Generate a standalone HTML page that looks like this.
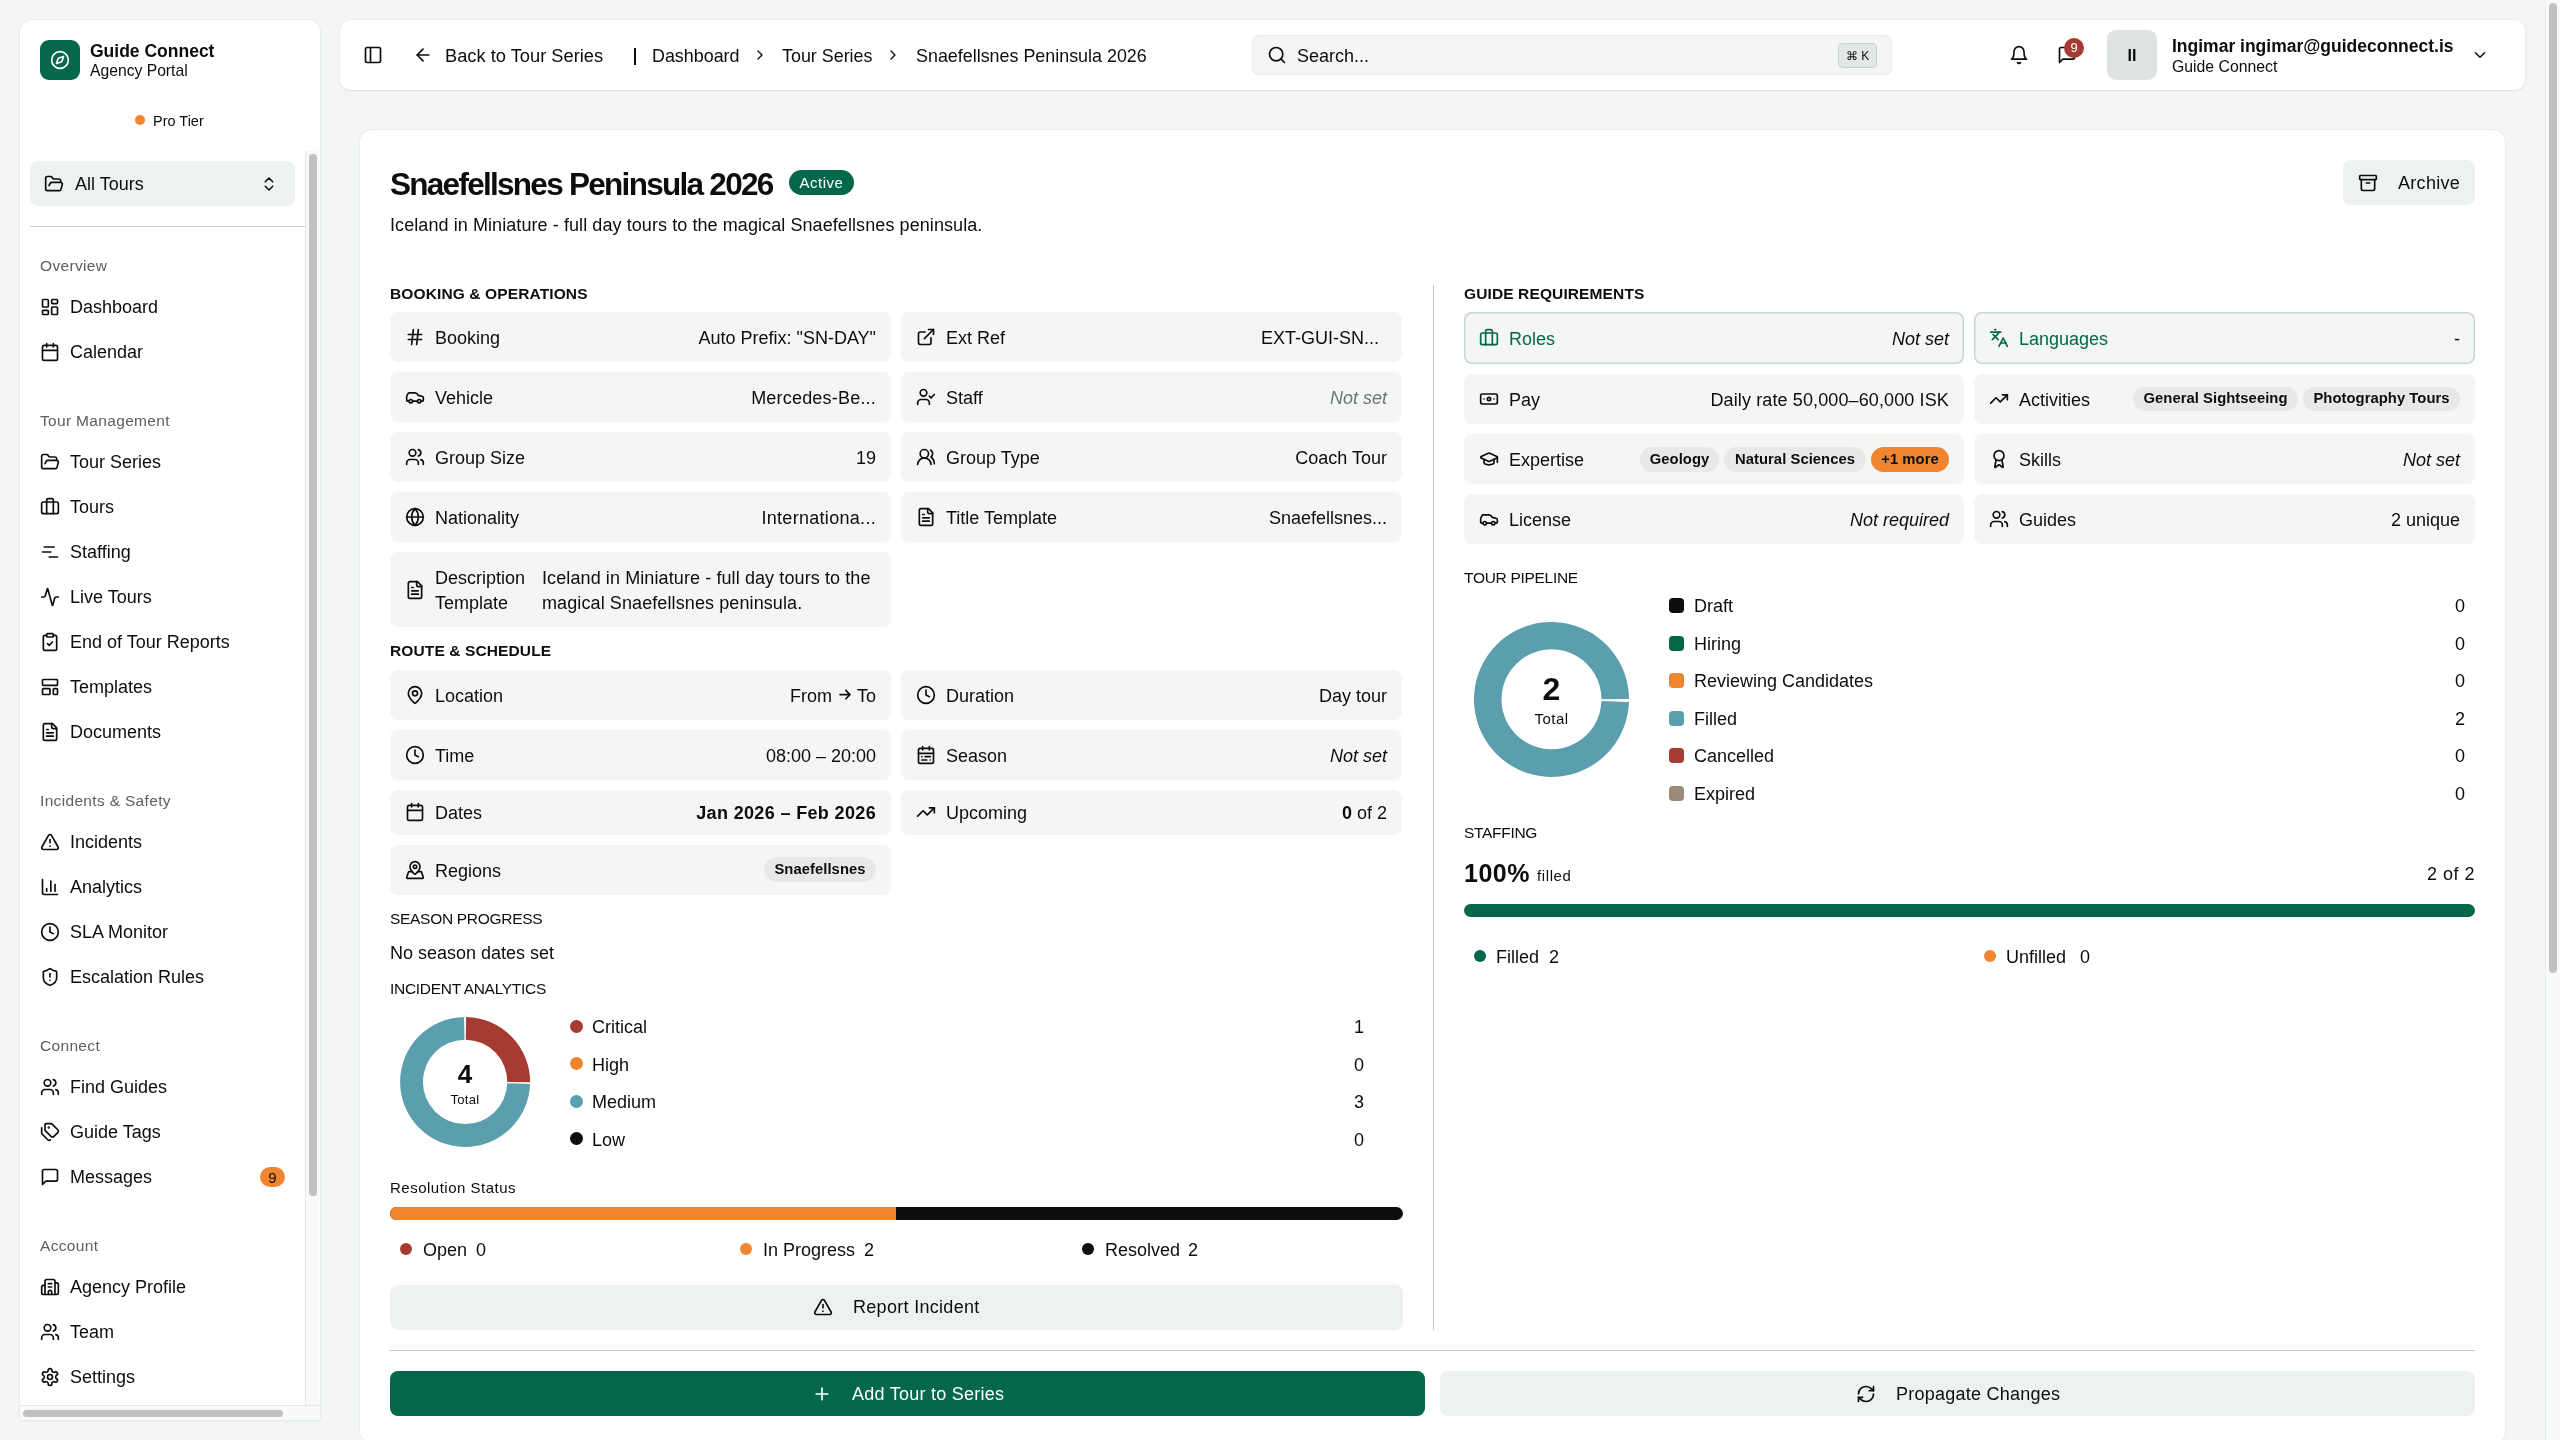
<!DOCTYPE html>
<html><head><meta charset="utf-8"><title>Snaefellsnes Peninsula 2026</title>
<style>
html,body{margin:0;padding:0;}
body{width:2560px;height:1440px;overflow:hidden;position:relative;background:#f4f6f5;font-family:"Liberation Sans",sans-serif;color:#0d0d0d;}
.t{position:absolute;white-space:nowrap;}
</style></head><body>
<div id="root" style="position:absolute;left:0;top:0;width:2560px;height:1440px;will-change:transform">
<div style="position:absolute;left:20px;top:20px;width:300px;height:1400px;background:#fff;border-radius:12px 12px 2px 2px;box-shadow:0 0 0 1px #e6ebe9, 0 1px 3px rgba(0,0,0,0.06);"></div>
<div style="position:absolute;left:40px;top:40px;width:40px;height:40px;background:#03684a;border-radius:9px;"></div>
<svg style="position:absolute;left:50.0px;top:50.0px" width="20" height="20" viewBox="0 0 24 24" fill="none" stroke="#fff" stroke-width="2" stroke-linecap="round" stroke-linejoin="round"><circle cx="12" cy="12" r="10"/><path d="m16.24 7.76-1.804 5.411a2 2 0 0 1-1.265 1.265L7.76 16.24l1.804-5.411a2 2 0 0 1 1.265-1.265z"/></svg>
<div class="t" style="left:90px;top:39.0px;height:24px;line-height:24px;font-size:17.5px;color:#0d0d0d;font-weight:700;">Guide Connect</div>
<div class="t" style="left:90px;top:59.7px;height:22px;line-height:22px;font-size:15.7px;color:#0d0d0d;">Agency Portal</div>
<div style="position:absolute;left:135px;top:115px;width:10px;height:10px;border-radius:5px;background:#f08530"></div>
<div class="t" style="left:153px;top:111.0px;height:20px;line-height:20px;font-size:14.5px;color:#0d0d0d;">Pro Tier</div>
<div style="position:absolute;left:30px;top:161px;width:265px;height:45px;background:#edf2f0;border-radius:8px;"></div>
<svg style="position:absolute;left:44.0px;top:173.5px" width="20" height="20" viewBox="0 0 24 24" fill="none" stroke="#0d0d0d" stroke-width="2" stroke-linecap="round" stroke-linejoin="round"><path d="m6 14 1.5-2.9A2 2 0 0 1 9.24 10H20a2 2 0 0 1 1.94 2.5l-1.54 6a2 2 0 0 1-1.95 1.5H4a2 2 0 0 1-2-2V5a2 2 0 0 1 2-2h3.9a2 2 0 0 1 1.69.9l.81 1.2a2 2 0 0 0 1.67.9H18a2 2 0 0 1 2 2v2"/></svg>
<div class="t" style="left:75px;top:172.0px;height:25px;line-height:25px;font-size:18px;color:#0d0d0d;">All Tours</div>
<svg style="position:absolute;left:260.0px;top:174.5px" width="18" height="18" viewBox="0 0 24 24" fill="none" stroke="#0d0d0d" stroke-width="2" stroke-linecap="round" stroke-linejoin="round"><path d="m7 15 5 5 5-5"/><path d="m7 9 5-5 5 5"/></svg>
<div style="position:absolute;left:30px;top:226px;width:275px;height:1px;background:#c9cdcc;border-radius:0px;"></div>
<div style="position:absolute;left:305px;top:151px;width:14px;height:1254px;background:#f8f9f9;border-radius:0px;box-shadow:inset 1px 0 0 #e4e8e7;"></div>
<div style="position:absolute;left:309px;top:154px;width:8px;height:1042px;background:#c1c1c1;border-radius:4px;"></div>
<div style="position:absolute;left:20px;top:1405px;width:300px;height:15px;background:#f8f9f9;border-radius:0px;box-shadow:inset 0 1px 0 #e4e8e7;"></div>
<div style="position:absolute;left:23px;top:1409.5px;width:260px;height:7px;background:#c1c1c1;border-radius:3.5px;"></div>
<div class="t" style="left:40px;top:254.7px;height:22px;line-height:22px;font-size:15.5px;color:#5c605f;letter-spacing:0.33px;">Overview</div>
<svg style="position:absolute;left:40.0px;top:297.0px" width="20" height="20" viewBox="0 0 24 24" fill="none" stroke="#0d0d0d" stroke-width="2" stroke-linecap="round" stroke-linejoin="round"><rect width="7" height="9" x="3" y="3" rx="1"/><rect width="7" height="5" x="14" y="3" rx="1"/><rect width="7" height="9" x="14" y="12" rx="1"/><rect width="7" height="5" x="3" y="16" rx="1"/></svg>
<div class="t" style="left:70px;top:294.5px;height:25px;line-height:25px;font-size:18px;color:#0d0d0d;">Dashboard</div>
<svg style="position:absolute;left:40.0px;top:342.0px" width="20" height="20" viewBox="0 0 24 24" fill="none" stroke="#0d0d0d" stroke-width="2" stroke-linecap="round" stroke-linejoin="round"><path d="M8 2v4"/><path d="M16 2v4"/><rect width="18" height="18" x="3" y="4" rx="2"/><path d="M3 10h18"/></svg>
<div class="t" style="left:70px;top:339.5px;height:25px;line-height:25px;font-size:18px;color:#0d0d0d;">Calendar</div>
<div class="t" style="left:40px;top:409.7px;height:22px;line-height:22px;font-size:15.5px;color:#5c605f;letter-spacing:0.33px;">Tour Management</div>
<svg style="position:absolute;left:40.0px;top:452.0px" width="20" height="20" viewBox="0 0 24 24" fill="none" stroke="#0d0d0d" stroke-width="2" stroke-linecap="round" stroke-linejoin="round"><path d="m6 14 1.5-2.9A2 2 0 0 1 9.24 10H20a2 2 0 0 1 1.94 2.5l-1.54 6a2 2 0 0 1-1.95 1.5H4a2 2 0 0 1-2-2V5a2 2 0 0 1 2-2h3.9a2 2 0 0 1 1.69.9l.81 1.2a2 2 0 0 0 1.67.9H18a2 2 0 0 1 2 2v2"/></svg>
<div class="t" style="left:70px;top:449.5px;height:25px;line-height:25px;font-size:18px;color:#0d0d0d;">Tour Series</div>
<svg style="position:absolute;left:40.0px;top:497.0px" width="20" height="20" viewBox="0 0 24 24" fill="none" stroke="#0d0d0d" stroke-width="2" stroke-linecap="round" stroke-linejoin="round"><path d="M16 20V4a2 2 0 0 0-2-2h-4a2 2 0 0 0-2 2v16"/><rect width="20" height="14" x="2" y="6" rx="2"/></svg>
<div class="t" style="left:70px;top:494.5px;height:25px;line-height:25px;font-size:18px;color:#0d0d0d;">Tours</div>
<svg style="position:absolute;left:40.0px;top:542.0px" width="20" height="20" viewBox="0 0 24 24" fill="none" stroke="#0d0d0d" stroke-width="2" stroke-linecap="round" stroke-linejoin="round"><path d="M5 6h12"/><path d="M3 12h10"/><path d="M11 18h10"/></svg>
<div class="t" style="left:70px;top:539.5px;height:25px;line-height:25px;font-size:18px;color:#0d0d0d;">Staffing</div>
<svg style="position:absolute;left:40.0px;top:587.0px" width="20" height="20" viewBox="0 0 24 24" fill="none" stroke="#0d0d0d" stroke-width="2" stroke-linecap="round" stroke-linejoin="round"><path d="M22 12h-2.48a2 2 0 0 0-1.93 1.46l-2.35 8.36a.25.25 0 0 1-.48 0L9.24 2.18a.25.25 0 0 0-.48 0l-2.35 8.36A2 2 0 0 1 4.49 12H2"/></svg>
<div class="t" style="left:70px;top:584.5px;height:25px;line-height:25px;font-size:18px;color:#0d0d0d;">Live Tours</div>
<svg style="position:absolute;left:40.0px;top:632.0px" width="20" height="20" viewBox="0 0 24 24" fill="none" stroke="#0d0d0d" stroke-width="2" stroke-linecap="round" stroke-linejoin="round"><rect width="8" height="4" x="8" y="2" rx="1" ry="1"/><path d="M16 4h2a2 2 0 0 1 2 2v14a2 2 0 0 1-2 2H6a2 2 0 0 1-2-2V6a2 2 0 0 1 2-2h2"/><path d="m9 14 2 2 4-4"/></svg>
<div class="t" style="left:70px;top:629.5px;height:25px;line-height:25px;font-size:18px;color:#0d0d0d;">End of Tour Reports</div>
<svg style="position:absolute;left:40.0px;top:677.0px" width="20" height="20" viewBox="0 0 24 24" fill="none" stroke="#0d0d0d" stroke-width="2" stroke-linecap="round" stroke-linejoin="round"><rect width="18" height="7" x="3" y="3" rx="1"/><rect width="9" height="7" x="3" y="14" rx="1"/><rect width="5" height="7" x="16" y="14" rx="1"/></svg>
<div class="t" style="left:70px;top:674.5px;height:25px;line-height:25px;font-size:18px;color:#0d0d0d;">Templates</div>
<svg style="position:absolute;left:40.0px;top:722.0px" width="20" height="20" viewBox="0 0 24 24" fill="none" stroke="#0d0d0d" stroke-width="2" stroke-linecap="round" stroke-linejoin="round"><path d="M15 2H6a2 2 0 0 0-2 2v16a2 2 0 0 0 2 2h12a2 2 0 0 0 2-2V7Z"/><path d="M14 2v4a2 2 0 0 0 2 2h4"/><path d="M10 9H8"/><path d="M16 13H8"/><path d="M16 17H8"/></svg>
<div class="t" style="left:70px;top:719.5px;height:25px;line-height:25px;font-size:18px;color:#0d0d0d;">Documents</div>
<div class="t" style="left:40px;top:789.7px;height:22px;line-height:22px;font-size:15.5px;color:#5c605f;letter-spacing:0.33px;">Incidents &amp; Safety</div>
<svg style="position:absolute;left:40.0px;top:832.0px" width="20" height="20" viewBox="0 0 24 24" fill="none" stroke="#0d0d0d" stroke-width="2" stroke-linecap="round" stroke-linejoin="round"><path d="m21.73 18-8-14a2 2 0 0 0-3.48 0l-8 14A2 2 0 0 0 4 21h16a2 2 0 0 0 1.73-3"/><path d="M12 9v4"/><path d="M12 17h.01"/></svg>
<div class="t" style="left:70px;top:829.5px;height:25px;line-height:25px;font-size:18px;color:#0d0d0d;">Incidents</div>
<svg style="position:absolute;left:40.0px;top:877.0px" width="20" height="20" viewBox="0 0 24 24" fill="none" stroke="#0d0d0d" stroke-width="2" stroke-linecap="round" stroke-linejoin="round"><path d="M3 3v16a2 2 0 0 0 2 2h16"/><path d="M18 17V9"/><path d="M13 17V5"/><path d="M8 17v-3"/></svg>
<div class="t" style="left:70px;top:874.5px;height:25px;line-height:25px;font-size:18px;color:#0d0d0d;">Analytics</div>
<svg style="position:absolute;left:40.0px;top:922.0px" width="20" height="20" viewBox="0 0 24 24" fill="none" stroke="#0d0d0d" stroke-width="2" stroke-linecap="round" stroke-linejoin="round"><circle cx="12" cy="12" r="10"/><polyline points="12 6 12 12 16 14"/></svg>
<div class="t" style="left:70px;top:919.5px;height:25px;line-height:25px;font-size:18px;color:#0d0d0d;">SLA Monitor</div>
<svg style="position:absolute;left:40.0px;top:967.0px" width="20" height="20" viewBox="0 0 24 24" fill="none" stroke="#0d0d0d" stroke-width="2" stroke-linecap="round" stroke-linejoin="round"><path d="M20 13c0 5-3.5 7.5-7.66 8.95a1 1 0 0 1-.67-.01C7.5 20.5 4 18 4 13V6a1 1 0 0 1 1-1c2 0 4.5-1.2 6.240-2.72a1.17 1.17 0 0 1 1.52 0C14.51 3.81 17 5 19 5a1 1 0 0 1 1 1z"/><path d="M12 8v4"/><path d="M12 16h.01"/></svg>
<div class="t" style="left:70px;top:964.5px;height:25px;line-height:25px;font-size:18px;color:#0d0d0d;">Escalation Rules</div>
<div class="t" style="left:40px;top:1034.7px;height:22px;line-height:22px;font-size:15.5px;color:#5c605f;letter-spacing:0.33px;">Connect</div>
<svg style="position:absolute;left:40.0px;top:1077.0px" width="20" height="20" viewBox="0 0 24 24" fill="none" stroke="#0d0d0d" stroke-width="2" stroke-linecap="round" stroke-linejoin="round"><path d="M16 21v-2a4 4 0 0 0-4-4H6a4 4 0 0 0-4 4v2"/><circle cx="9" cy="7" r="4"/><path d="M22 21v-2a4 4 0 0 0-3-3.87"/><path d="M16 3.130a4 4 0 0 1 0 7.75"/></svg>
<div class="t" style="left:70px;top:1074.5px;height:25px;line-height:25px;font-size:18px;color:#0d0d0d;">Find Guides</div>
<svg style="position:absolute;left:40.0px;top:1122.0px" width="20" height="20" viewBox="0 0 24 24" fill="none" stroke="#0d0d0d" stroke-width="2" stroke-linecap="round" stroke-linejoin="round"><path d="M13.172 2a2 2 0 0 1 1.414.586l6.71 6.71a2.4 2.4 0 0 1 0 3.408l-4.592 4.592a2.4 2.4 0 0 1-3.408 0l-6.71-6.71A2 2 0 0 1 6 9.172V3a1 1 0 0 1 1-1z"/><path d="M2 7v6.172a2 2 0 0 0 .586 1.414l6.71 6.71a2.4 2.4 0 0 0 3.191.193"/><circle cx="10.5" cy="6.5" r=".5" fill="currentColor"/></svg>
<div class="t" style="left:70px;top:1119.5px;height:25px;line-height:25px;font-size:18px;color:#0d0d0d;">Guide Tags</div>
<svg style="position:absolute;left:40.0px;top:1167.0px" width="20" height="20" viewBox="0 0 24 24" fill="none" stroke="#0d0d0d" stroke-width="2" stroke-linecap="round" stroke-linejoin="round"><path d="M21 15a2 2 0 0 1-2 2H7l-4 4V5a2 2 0 0 1 2-2h14a2 2 0 0 1 2 2z"/></svg>
<div class="t" style="left:70px;top:1164.5px;height:25px;line-height:25px;font-size:18px;color:#0d0d0d;">Messages</div>
<div class="t" style="left:40px;top:1234.7px;height:22px;line-height:22px;font-size:15.5px;color:#5c605f;letter-spacing:0.33px;">Account</div>
<svg style="position:absolute;left:40.0px;top:1277.0px" width="20" height="20" viewBox="0 0 24 24" fill="none" stroke="#0d0d0d" stroke-width="2" stroke-linecap="round" stroke-linejoin="round"><path d="M10 12h4"/><path d="M10 8h4"/><path d="M14 21v-3a2 2 0 0 0-4 0v3"/><path d="M6 10H4a2 2 0 0 0-2 2v7a2 2 0 0 0 2 2h16a2 2 0 0 0 2-2V9a2 2 0 0 0-2-2h-2"/><path d="M6 21V5a2 2 0 0 1 2-2h8a2 2 0 0 1 2 2v16"/></svg>
<div class="t" style="left:70px;top:1274.5px;height:25px;line-height:25px;font-size:18px;color:#0d0d0d;">Agency Profile</div>
<svg style="position:absolute;left:40.0px;top:1322.0px" width="20" height="20" viewBox="0 0 24 24" fill="none" stroke="#0d0d0d" stroke-width="2" stroke-linecap="round" stroke-linejoin="round"><path d="M16 21v-2a4 4 0 0 0-4-4H6a4 4 0 0 0-4 4v2"/><circle cx="9" cy="7" r="4"/><path d="M22 21v-2a4 4 0 0 0-3-3.87"/><path d="M16 3.130a4 4 0 0 1 0 7.75"/></svg>
<div class="t" style="left:70px;top:1319.5px;height:25px;line-height:25px;font-size:18px;color:#0d0d0d;">Team</div>
<svg style="position:absolute;left:40.0px;top:1367.0px" width="20" height="20" viewBox="0 0 24 24" fill="none" stroke="#0d0d0d" stroke-width="2" stroke-linecap="round" stroke-linejoin="round"><path d="M12.22 2h-.44a2 2 0 0 0-2 2v.18a2 2 0 0 1-1 1.73l-.43.25a2 2 0 0 1-2 0l-.15-.08a2 2 0 0 0-2.73.73l-.22.38a2 2 0 0 0 .73 2.73l.15.1a2 2 0 0 1 1 1.72v.51a2 2 0 0 1-1 1.74l-.15.09a2 2 0 0 0-.73 2.730l.22.38a2 2 0 0 0 2.73.73l.15-.08a2 2 0 0 1 2 0l.43.25a2 2 0 0 1 1 1.73V20a2 2 0 0 0 2 2h.44a2 2 0 0 0 2-2v-.18a2 2 0 0 1 1-1.73l.43-.25a2 2 0 0 1 2 0l.15.08a2 2 0 0 0 2.73-.73l.22-.39a2 2 0 0 0-.73-2.73l-.15-.08a2 2 0 0 1-1-1.74v-.5a2 2 0 0 1 1-1.74l.15-.09a2 2 0 0 0 .73-2.73l-.22-.38a2 2 0 0 0-2.73-.73l-.15.08a2 2 0 0 1-2 0l-.43-.25a2 2 0 0 1-1-1.73V4a2 2 0 0 0-2-2z"/><circle cx="12" cy="12" r="3"/></svg>
<div class="t" style="left:70px;top:1364.5px;height:25px;line-height:25px;font-size:18px;color:#0d0d0d;">Settings</div>
<div style="position:absolute;left:260px;top:1167px;width:25px;height:20px;background:#f08530;border-radius:10px;"></div>
<div class="t" style="left:-327.5px;width:1200px;text-align:center;top:1166.5px;height:21px;line-height:21px;font-size:15px;color:#0d0d0d;">9</div>
<div style="position:absolute;left:340px;top:20px;width:2185px;height:70px;background:#fff;border-radius:10px;box-shadow:0 1px 2px rgba(0,0,0,0.08), 0 0 0 1px #eef1f0;"></div>
<svg style="position:absolute;left:363.0px;top:45.0px" width="20" height="20" viewBox="0 0 24 24" fill="none" stroke="#0d0d0d" stroke-width="2" stroke-linecap="round" stroke-linejoin="round"><rect width="18" height="18" x="3" y="3" rx="2"/><path d="M9 3v18"/></svg>
<svg style="position:absolute;left:413.0px;top:45.0px" width="20" height="20" viewBox="0 0 24 24" fill="none" stroke="#0d0d0d" stroke-width="2" stroke-linecap="round" stroke-linejoin="round"><path d="m12 19-7-7 7-7"/><path d="M19 12H5"/></svg>
<div class="t" style="left:445px;top:42.5px;height:26px;line-height:26px;font-size:18.3px;color:#0d0d0d;">Back to Tour Series</div>
<div style="position:absolute;left:634px;top:48px;width:1.5px;height:17px;background:#0d0d0d;border-radius:0px;"></div>
<div class="t" style="left:652px;top:44.0px;height:25px;line-height:25px;font-size:17.9px;color:#0d0d0d;">Dashboard</div>
<svg style="position:absolute;left:752.0px;top:47.0px" width="16" height="16" viewBox="0 0 24 24" fill="none" stroke="#0d0d0d" stroke-width="2" stroke-linecap="round" stroke-linejoin="round"><path d="m9 18 6-6-6-6"/></svg>
<div class="t" style="left:782px;top:44.0px;height:25px;line-height:25px;font-size:17.9px;color:#0d0d0d;">Tour Series</div>
<svg style="position:absolute;left:885.0px;top:47.0px" width="16" height="16" viewBox="0 0 24 24" fill="none" stroke="#0d0d0d" stroke-width="2" stroke-linecap="round" stroke-linejoin="round"><path d="m9 18 6-6-6-6"/></svg>
<div class="t" style="left:916px;top:44.0px;height:25px;line-height:25px;font-size:17.9px;color:#0d0d0d;">Snaefellsnes Peninsula 2026</div>
<div style="position:absolute;left:1252px;top:35px;width:640px;height:40px;background:#f4f6f5;border-radius:7px;box-shadow:inset 0 0 0 1px #e9eceb;"></div>
<svg style="position:absolute;left:1267.0px;top:45.0px" width="20" height="20" viewBox="0 0 24 24" fill="none" stroke="#0d0d0d" stroke-width="2" stroke-linecap="round" stroke-linejoin="round"><circle cx="11" cy="11" r="8"/><path d="m21 21-4.3-4.3"/></svg>
<div class="t" style="left:1297px;top:44.0px;height:25px;line-height:25px;font-size:18px;color:#0d0d0d;">Search...</div>
<div style="position:absolute;left:1838px;top:43px;width:39px;height:25px;background:#e3e7e6;border-radius:5px;box-shadow:inset 0 0 0 1px #c9cecc;"></div>
<div class="t" style="left:1257.5px;width:1200px;text-align:center;top:48.0px;height:17px;line-height:17px;font-size:12px;color:#0d0d0d;">⌘ K</div>
<svg style="position:absolute;left:2009.0px;top:45.0px" width="20" height="20" viewBox="0 0 24 24" fill="none" stroke="#0d0d0d" stroke-width="2" stroke-linecap="round" stroke-linejoin="round"><path d="M6 8a6 6 0 0 1 12 0c0 7 3 9 3 9H3s3-2 3-9"/><path d="M10.3 21a1.94 1.94 0 0 0 3.4 0"/></svg>
<svg style="position:absolute;left:2057.0px;top:45.0px" width="20" height="20" viewBox="0 0 24 24" fill="none" stroke="#0d0d0d" stroke-width="2" stroke-linecap="round" stroke-linejoin="round"><path d="M21 15a2 2 0 0 1-2 2H7l-4 4V5a2 2 0 0 1 2-2h14a2 2 0 0 1 2 2z"/></svg>
<div style="position:absolute;left:2064px;top:38px;width:20px;height:20px;border-radius:10px;background:#a63c31;color:#fff;font-size:13px;line-height:20px;text-align:center">9</div>
<div style="position:absolute;left:2107px;top:30px;width:50px;height:50px;background:#dfe3e2;border-radius:9px;"></div>
<div class="t" style="left:1532px;width:1200px;text-align:center;top:45.0px;height:22px;line-height:22px;font-size:16px;color:#0d0d0d;font-weight:700;">II</div>
<div class="t" style="left:2172px;top:33.5px;height:24px;line-height:24px;font-size:17.5px;color:#0d0d0d;font-weight:700;">Ingimar ingimar@guideconnect.is</div>
<div class="t" style="left:2172px;top:55.5px;height:22px;line-height:22px;font-size:15.8px;color:#0d0d0d;">Guide Connect</div>
<svg style="position:absolute;left:2471.0px;top:46.0px" width="18" height="18" viewBox="0 0 24 24" fill="none" stroke="#0d0d0d" stroke-width="2" stroke-linecap="round" stroke-linejoin="round"><path d="m6 9 6 6 6-6"/></svg>
<div style="position:absolute;left:2545px;top:0px;width:15px;height:1440px;background:#f8f9f9;border-radius:0px;box-shadow:inset 1px 0 0 #e4e8e7;"></div>
<div style="position:absolute;left:2549px;top:3px;width:8px;height:970px;background:#c1c1c1;border-radius:4px;"></div>
<div style="position:absolute;left:360px;top:130px;width:2145px;height:1313px;background:#fff;border-radius:12px;box-shadow:0 0 0 1px #e9edeb, 0 1px 3px rgba(0,0,0,0.05);"></div>
<div class="t" style="left:390px;top:162.0px;height:44px;line-height:44px;font-size:31.5px;color:#0d0d0d;letter-spacing:-1.72px;font-weight:700;">Snaefellsnes Peninsula 2026</div>
<div style="position:absolute;left:789px;top:170px;width:65px;height:25px;background:#03684a;border-radius:12.5px;"></div>
<div class="t" style="left:221.5px;width:1200px;text-align:center;top:171.5px;height:21px;line-height:21px;font-size:15px;color:#fff;letter-spacing:0.5px;">Active</div>
<div class="t" style="left:390px;top:213.0px;height:25px;line-height:25px;font-size:18px;color:#0d0d0d;letter-spacing:0.08px;">Iceland in Miniature - full day tours to the magical Snaefellsnes peninsula.</div>
<div style="position:absolute;left:2343px;top:160px;width:132px;height:45px;background:#edf2f0;border-radius:8px;"></div>
<svg style="position:absolute;left:2358.0px;top:172.5px" width="20" height="20" viewBox="0 0 24 24" fill="none" stroke="#0d0d0d" stroke-width="2" stroke-linecap="round" stroke-linejoin="round"><rect width="20" height="5" x="2" y="3" rx="1"/><path d="M4 8v11a2 2 0 0 0 2 2h12a2 2 0 0 0 2-2V8"/><path d="M10 12h4"/></svg>
<div class="t" style="left:2398px;top:170.5px;height:25px;line-height:25px;font-size:18px;color:#0d0d0d;letter-spacing:0.3px;">Archive</div>
<div class="t" style="left:390px;top:282.5px;height:22px;line-height:22px;font-size:15.5px;color:#0d0d0d;letter-spacing:0.12px;font-weight:700;">BOOKING &amp; OPERATIONS</div>
<div style="position:absolute;left:390px;top:312px;width:501px;height:50px;background:#f3f6f5;border-radius:8px;"></div>
<svg style="position:absolute;left:405.0px;top:326.5px" width="20" height="20" viewBox="0 0 24 24" fill="none" stroke="#0d0d0d" stroke-width="2" stroke-linecap="round" stroke-linejoin="round"><line x1="4" x2="20" y1="9" y2="9"/><line x1="4" x2="20" y1="15" y2="15"/><line x1="10" x2="8" y1="3" y2="21"/><line x1="16" x2="14" y1="3" y2="21"/></svg>
<div class="t" style="left:435px;top:325.5px;height:25px;line-height:25px;font-size:18px;color:#0d0d0d;">Booking</div>
<div class="t" style="left:-324px;width:1200px;text-align:right;top:325.5px;height:25px;line-height:25px;font-size:18px;color:#0d0d0d;">Auto Prefix: &quot;SN-DAY&quot;</div>
<div style="position:absolute;left:901px;top:312px;width:501px;height:50px;background:#f3f6f5;border-radius:8px;"></div>
<svg style="position:absolute;left:916.0px;top:326.5px" width="20" height="20" viewBox="0 0 24 24" fill="none" stroke="#0d0d0d" stroke-width="2" stroke-linecap="round" stroke-linejoin="round"><path d="M15 3h6v6"/><path d="M10 14 21 3"/><path d="M18 13v6a2 2 0 0 1-2 2H5a2 2 0 0 1-2-2V8a2 2 0 0 1 2-2h6"/></svg>
<div class="t" style="left:946px;top:325.5px;height:25px;line-height:25px;font-size:18px;color:#0d0d0d;">Ext Ref</div>
<div class="t" style="left:179px;width:1200px;text-align:right;top:325.5px;height:25px;line-height:25px;font-size:18px;color:#0d0d0d;">EXT-GUI-SN...</div>
<div style="position:absolute;left:390px;top:372px;width:501px;height:50px;background:#f3f6f5;border-radius:8px;"></div>
<svg style="position:absolute;left:405.0px;top:386.5px" width="20" height="20" viewBox="0 0 24 24" fill="none" stroke="#0d0d0d" stroke-width="2" stroke-linecap="round" stroke-linejoin="round"><path d="M19 17h2c.6 0 1-.4 1-1v-3c0-.9-.7-1.7-1.5-1.9C18.7 10.6 16 10 16 10s-1.3-1.4-2.2-2.3c-.5-.4-1.1-.7-1.8-.7H5c-.6 0-1.1.4-1.4.9l-1.4 2.9A3.7 3.7 0 0 0 2 12v4c0 .6.4 1 1 1h2"/><circle cx="7" cy="17" r="2"/><path d="M9 17h6"/><circle cx="17" cy="17" r="2"/></svg>
<div class="t" style="left:435px;top:385.5px;height:25px;line-height:25px;font-size:18px;color:#0d0d0d;">Vehicle</div>
<div class="t" style="left:-324px;width:1200px;text-align:right;top:385.5px;height:25px;line-height:25px;font-size:18px;color:#0d0d0d;letter-spacing:0.2px;">Mercedes-Be...</div>
<div style="position:absolute;left:901px;top:372px;width:501px;height:50px;background:#f3f6f5;border-radius:8px;"></div>
<svg style="position:absolute;left:916.0px;top:386.5px" width="20" height="20" viewBox="0 0 24 24" fill="none" stroke="#0d0d0d" stroke-width="2" stroke-linecap="round" stroke-linejoin="round"><path d="M16 21v-2a4 4 0 0 0-4-4H6a4 4 0 0 0-4 4v2"/><circle cx="9" cy="7" r="4"/><polyline points="16 11 18 13 22 9"/></svg>
<div class="t" style="left:946px;top:385.5px;height:25px;line-height:25px;font-size:18px;color:#0d0d0d;">Staff</div>
<div class="t" style="left:187px;width:1200px;text-align:right;top:385.5px;height:25px;line-height:25px;font-size:18px;color:#6f7372;font-style:italic;">Not set</div>
<div style="position:absolute;left:390px;top:432px;width:501px;height:50px;background:#f3f6f5;border-radius:8px;"></div>
<svg style="position:absolute;left:405.0px;top:446.5px" width="20" height="20" viewBox="0 0 24 24" fill="none" stroke="#0d0d0d" stroke-width="2" stroke-linecap="round" stroke-linejoin="round"><path d="M16 21v-2a4 4 0 0 0-4-4H6a4 4 0 0 0-4 4v2"/><circle cx="9" cy="7" r="4"/><path d="M22 21v-2a4 4 0 0 0-3-3.87"/><path d="M16 3.130a4 4 0 0 1 0 7.75"/></svg>
<div class="t" style="left:435px;top:445.5px;height:25px;line-height:25px;font-size:18px;color:#0d0d0d;">Group Size</div>
<div class="t" style="left:-324px;width:1200px;text-align:right;top:445.5px;height:25px;line-height:25px;font-size:18px;color:#0d0d0d;">19</div>
<div style="position:absolute;left:901px;top:432px;width:501px;height:50px;background:#f3f6f5;border-radius:8px;"></div>
<svg style="position:absolute;left:916.0px;top:446.5px" width="20" height="20" viewBox="0 0 24 24" fill="none" stroke="#0d0d0d" stroke-width="2" stroke-linecap="round" stroke-linejoin="round"><path d="M18 21a8 8 0 0 0-16 0"/><circle cx="10" cy="8" r="5"/><path d="M22 20c0-3.37-2-6.5-4-8a5 5 0 0 0-.45-8.3"/></svg>
<div class="t" style="left:946px;top:445.5px;height:25px;line-height:25px;font-size:18px;color:#0d0d0d;">Group Type</div>
<div class="t" style="left:187px;width:1200px;text-align:right;top:445.5px;height:25px;line-height:25px;font-size:18px;color:#0d0d0d;">Coach Tour</div>
<div style="position:absolute;left:390px;top:492px;width:501px;height:50px;background:#f3f6f5;border-radius:8px;"></div>
<svg style="position:absolute;left:405.0px;top:506.5px" width="20" height="20" viewBox="0 0 24 24" fill="none" stroke="#0d0d0d" stroke-width="2" stroke-linecap="round" stroke-linejoin="round"><circle cx="12" cy="12" r="10"/><path d="M12 2a14.5 14.5 0 0 0 0 20 14.5 14.5 0 0 0 0-20"/><path d="M2 12h20"/></svg>
<div class="t" style="left:435px;top:505.5px;height:25px;line-height:25px;font-size:18px;color:#0d0d0d;">Nationality</div>
<div class="t" style="left:-324px;width:1200px;text-align:right;top:505.5px;height:25px;line-height:25px;font-size:18px;color:#0d0d0d;letter-spacing:0.3px;">Internationa...</div>
<div style="position:absolute;left:901px;top:492px;width:501px;height:50px;background:#f3f6f5;border-radius:8px;"></div>
<svg style="position:absolute;left:916.0px;top:506.5px" width="20" height="20" viewBox="0 0 24 24" fill="none" stroke="#0d0d0d" stroke-width="2" stroke-linecap="round" stroke-linejoin="round"><path d="M15 2H6a2 2 0 0 0-2 2v16a2 2 0 0 0 2 2h12a2 2 0 0 0 2-2V7Z"/><path d="M14 2v4a2 2 0 0 0 2 2h4"/><path d="M10 9H8"/><path d="M16 13H8"/><path d="M16 17H8"/></svg>
<div class="t" style="left:946px;top:505.5px;height:25px;line-height:25px;font-size:18px;color:#0d0d0d;">Title Template</div>
<div class="t" style="left:187px;width:1200px;text-align:right;top:505.5px;height:25px;line-height:25px;font-size:18px;color:#0d0d0d;">Snaefellsnes...</div>
<div style="position:absolute;left:390px;top:552px;width:501px;height:75px;background:#f3f6f5;border-radius:8px;"></div>
<svg style="position:absolute;left:405.0px;top:580.0px" width="20" height="20" viewBox="0 0 24 24" fill="none" stroke="#0d0d0d" stroke-width="2" stroke-linecap="round" stroke-linejoin="round"><path d="M15 2H6a2 2 0 0 0-2 2v16a2 2 0 0 0 2 2h12a2 2 0 0 0 2-2V7Z"/><path d="M14 2v4a2 2 0 0 0 2 2h4"/><path d="M10 9H8"/><path d="M16 13H8"/><path d="M16 17H8"/></svg>
<div class="t" style="left:435px;top:565.5px;height:25px;line-height:25px;font-size:18px;color:#0d0d0d;">Description</div>
<div class="t" style="left:435px;top:590.5px;height:25px;line-height:25px;font-size:18px;color:#0d0d0d;">Template</div>
<div class="t" style="left:542px;top:565.5px;height:25px;line-height:25px;font-size:18px;color:#0d0d0d;letter-spacing:0.1px;">Iceland in Miniature - full day tours to the</div>
<div class="t" style="left:542px;top:590.5px;height:25px;line-height:25px;font-size:18px;color:#0d0d0d;letter-spacing:0.1px;">magical Snaefellsnes peninsula.</div>
<div class="t" style="left:390px;top:639.5px;height:22px;line-height:22px;font-size:15.5px;color:#0d0d0d;letter-spacing:0.12px;font-weight:700;">ROUTE &amp; SCHEDULE</div>
<div style="position:absolute;left:390px;top:670px;width:501px;height:50px;background:#f3f6f5;border-radius:8px;"></div>
<svg style="position:absolute;left:405.0px;top:684.5px" width="20" height="20" viewBox="0 0 24 24" fill="none" stroke="#0d0d0d" stroke-width="2" stroke-linecap="round" stroke-linejoin="round"><path d="M20 10c0 4.993-5.539 10.193-7.399 11.799a1 1 0 0 1-1.202 0C9.539 20.193 4 14.993 4 10a8 8 0 0 1 16 0"/><circle cx="12" cy="10" r="3"/></svg>
<div class="t" style="left:435px;top:683.5px;height:25px;line-height:25px;font-size:18px;color:#0d0d0d;">Location</div>
<div class="t" style="left:-368px;width:1200px;text-align:right;top:683.5px;height:25px;line-height:25px;font-size:18px;color:#0d0d0d;">From</div>
<svg style="position:absolute;left:838px;top:688px" width="14" height="13" viewBox="0 0 14 13" fill="none" stroke="#0d0d0d" stroke-width="1.6" stroke-linecap="round" stroke-linejoin="round"><path d="M2 6.6h10M7.8 2.4l4.2 4.2-4.2 4.2"/></svg>
<div class="t" style="left:857px;top:683.5px;height:25px;line-height:25px;font-size:18px;color:#0d0d0d;">To</div>
<div style="position:absolute;left:901px;top:670px;width:501px;height:50px;background:#f3f6f5;border-radius:8px;"></div>
<svg style="position:absolute;left:916.0px;top:684.5px" width="20" height="20" viewBox="0 0 24 24" fill="none" stroke="#0d0d0d" stroke-width="2" stroke-linecap="round" stroke-linejoin="round"><circle cx="12" cy="12" r="10"/><polyline points="12 6 12 12 16 14"/></svg>
<div class="t" style="left:946px;top:683.5px;height:25px;line-height:25px;font-size:18px;color:#0d0d0d;">Duration</div>
<div class="t" style="left:187px;width:1200px;text-align:right;top:683.5px;height:25px;line-height:25px;font-size:18px;color:#0d0d0d;">Day tour</div>
<div style="position:absolute;left:390px;top:730px;width:501px;height:50px;background:#f3f6f5;border-radius:8px;"></div>
<svg style="position:absolute;left:405.0px;top:744.5px" width="20" height="20" viewBox="0 0 24 24" fill="none" stroke="#0d0d0d" stroke-width="2" stroke-linecap="round" stroke-linejoin="round"><circle cx="12" cy="12" r="10"/><polyline points="12 6 12 12 16 14"/></svg>
<div class="t" style="left:435px;top:743.5px;height:25px;line-height:25px;font-size:18px;color:#0d0d0d;">Time</div>
<div class="t" style="left:-324px;width:1200px;text-align:right;top:743.5px;height:25px;line-height:25px;font-size:18px;color:#0d0d0d;">08:00 – 20:00</div>
<div style="position:absolute;left:901px;top:730px;width:501px;height:50px;background:#f3f6f5;border-radius:8px;"></div>
<svg style="position:absolute;left:916.0px;top:744.5px" width="20" height="20" viewBox="0 0 24 24" fill="none" stroke="#0d0d0d" stroke-width="2" stroke-linecap="round" stroke-linejoin="round"><rect width="18" height="18" x="3" y="4" rx="2"/><path d="M16 2v4"/><path d="M3 10h18"/><path d="M8 2v4"/><path d="M17 14h-6"/><path d="M13 18H7"/><path d="M7 14h.01"/><path d="M17 18h.01"/></svg>
<div class="t" style="left:946px;top:743.5px;height:25px;line-height:25px;font-size:18px;color:#0d0d0d;">Season</div>
<div class="t" style="left:187px;width:1200px;text-align:right;top:743.5px;height:25px;line-height:25px;font-size:18px;color:#0d0d0d;font-style:italic;">Not set</div>
<div style="position:absolute;left:390px;top:790px;width:501px;height:45px;background:#f3f6f5;border-radius:8px;"></div>
<svg style="position:absolute;left:405.0px;top:802.0px" width="20" height="20" viewBox="0 0 24 24" fill="none" stroke="#0d0d0d" stroke-width="2" stroke-linecap="round" stroke-linejoin="round"><path d="M8 2v4"/><path d="M16 2v4"/><rect width="18" height="18" x="3" y="4" rx="2"/><path d="M3 10h18"/></svg>
<div class="t" style="left:435px;top:801.0px;height:25px;line-height:25px;font-size:18px;color:#0d0d0d;">Dates</div>
<div class="t" style="left:-324px;width:1200px;text-align:right;top:801.0px;height:25px;line-height:25px;font-size:18px;color:#0d0d0d;font-weight:700;letter-spacing:0.35px;">Jan 2026 – Feb 2026</div>
<div style="position:absolute;left:901px;top:790px;width:501px;height:45px;background:#f3f6f5;border-radius:8px;"></div>
<svg style="position:absolute;left:916.0px;top:802.0px" width="20" height="20" viewBox="0 0 24 24" fill="none" stroke="#0d0d0d" stroke-width="2" stroke-linecap="round" stroke-linejoin="round"><polyline points="22 7 13.5 15.5 8.5 10.5 2 17"/><polyline points="16 7 22 7 22 13"/></svg>
<div class="t" style="left:946px;top:801.0px;height:25px;line-height:25px;font-size:18px;color:#0d0d0d;">Upcoming</div>
<div class="t" style="left:187px;width:1200px;text-align:right;top:801.0px;height:25px;line-height:25px;font-size:18px;color:#0d0d0d;"><b>0</b> of 2</div>
<div style="position:absolute;left:390px;top:845px;width:501px;height:50px;background:#f3f6f5;border-radius:8px;"></div>
<svg style="position:absolute;left:405.0px;top:859.5px" width="20" height="20" viewBox="0 0 24 24" fill="none" stroke="#0d0d0d" stroke-width="2" stroke-linecap="round" stroke-linejoin="round"><path d="M18 8c0 3.613-3.869 7.429-5.393 8.795a1 1 0 0 1-1.214 0C9.87 15.429 6 11.613 6 8a6 6 0 0 1 12 0"/><circle cx="12" cy="8" r="2"/><path d="M8.714 14h-3.71a1 1 0 0 0-.948.683l-2.004 6A1 1 0 0 0 3 22h18a1 1 0 0 0 .948-1.316l-2-6a1 1 0 0 0-.949-.684h-3.712"/></svg>
<div class="t" style="left:435px;top:858.5px;height:25px;line-height:25px;font-size:18px;color:#0d0d0d;">Regions</div>
<div style="position:absolute;left:764px;top:857px;width:112px;height:25px;background:#e6e9e8;border-radius:12.5px;"></div>
<div class="t" style="left:220px;width:1200px;text-align:center;top:859.0px;height:21px;line-height:21px;font-size:14.8px;color:#0d0d0d;letter-spacing:0.05px;font-weight:700;">Snaefellsnes</div>
<div class="t" style="left:390px;top:907.6px;height:22px;line-height:22px;font-size:15.5px;color:#0d0d0d;letter-spacing:-0.3px;">SEASON PROGRESS</div>
<div class="t" style="left:390px;top:941.0px;height:25px;line-height:25px;font-size:18px;color:#0d0d0d;">No season dates set</div>
<div class="t" style="left:390px;top:977.6px;height:22px;line-height:22px;font-size:15.5px;color:#0d0d0d;letter-spacing:-0.3px;">INCIDENT ANALYTICS</div>
<svg style="position:absolute;left:390px;top:1007px" width="150" height="150" viewBox="390 1007 150 150"><path d="M466.12 1016.91 A65 65 0 0 1 530.10 1082.13 L507.30 1082.05 A42.2 42.2 0 0 0 465.76 1039.71Z" fill="#a63c31"/><path d="M530.06 1084.06 A65 65 0 1 1 464.08 1016.91 L464.44 1039.71 A42.2 42.2 0 1 0 507.28 1083.30Z" fill="#5b9fae"/></svg>
<div class="t" style="left:-135px;width:1200px;text-align:center;top:1056.3px;height:36px;line-height:36px;font-size:26px;color:#0d0d0d;font-weight:700;">4</div>
<div class="t" style="left:-135px;width:1200px;text-align:center;top:1090.8px;height:18px;line-height:18px;font-size:13px;color:#0d0d0d;letter-spacing:0.3px;">Total</div>
<div style="position:absolute;left:570px;top:1019.5px;width:13px;height:13px;border-radius:7px;background:#a63c31"></div>
<div class="t" style="left:592px;top:1015.0px;height:25px;line-height:25px;font-size:18px;color:#0d0d0d;">Critical</div>
<div class="t" style="left:164px;width:1200px;text-align:right;top:1015.0px;height:25px;line-height:25px;font-size:18px;color:#0d0d0d;">1</div>
<div style="position:absolute;left:570px;top:1057.0px;width:13px;height:13px;border-radius:7px;background:#f08530"></div>
<div class="t" style="left:592px;top:1052.5px;height:25px;line-height:25px;font-size:18px;color:#0d0d0d;">High</div>
<div class="t" style="left:164px;width:1200px;text-align:right;top:1052.5px;height:25px;line-height:25px;font-size:18px;color:#0d0d0d;">0</div>
<div style="position:absolute;left:570px;top:1094.5px;width:13px;height:13px;border-radius:7px;background:#5b9fae"></div>
<div class="t" style="left:592px;top:1090.0px;height:25px;line-height:25px;font-size:18px;color:#0d0d0d;">Medium</div>
<div class="t" style="left:164px;width:1200px;text-align:right;top:1090.0px;height:25px;line-height:25px;font-size:18px;color:#0d0d0d;">3</div>
<div style="position:absolute;left:570px;top:1132.0px;width:13px;height:13px;border-radius:7px;background:#0d0d0d"></div>
<div class="t" style="left:592px;top:1127.5px;height:25px;line-height:25px;font-size:18px;color:#0d0d0d;">Low</div>
<div class="t" style="left:164px;width:1200px;text-align:right;top:1127.5px;height:25px;line-height:25px;font-size:18px;color:#0d0d0d;">0</div>
<div class="t" style="left:390px;top:1177.0px;height:21px;line-height:21px;font-size:15px;color:#0d0d0d;letter-spacing:0.5px;">Resolution Status</div>
<div style="position:absolute;left:390px;top:1207px;width:1013px;height:13px;border-radius:7px;overflow:hidden;background:#0d0d0d"><div style="width:506px;height:13px;background:#f08530"></div></div>
<div style="position:absolute;left:400px;top:1243px;width:12px;height:12px;border-radius:6px;background:#a63c31"></div>
<div class="t" style="left:423px;top:1238.0px;height:25px;line-height:25px;font-size:18px;color:#0d0d0d;">Open</div>
<div class="t" style="left:476px;top:1238.0px;height:25px;line-height:25px;font-size:18px;color:#0d0d0d;">0</div>
<div style="position:absolute;left:740px;top:1243px;width:12px;height:12px;border-radius:6px;background:#f08530"></div>
<div class="t" style="left:763px;top:1238.0px;height:25px;line-height:25px;font-size:18px;color:#0d0d0d;">In Progress</div>
<div class="t" style="left:864px;top:1238.0px;height:25px;line-height:25px;font-size:18px;color:#0d0d0d;">2</div>
<div style="position:absolute;left:1082px;top:1243px;width:12px;height:12px;border-radius:6px;background:#0d0d0d"></div>
<div class="t" style="left:1105px;top:1238.0px;height:25px;line-height:25px;font-size:18px;color:#0d0d0d;">Resolved</div>
<div class="t" style="left:1188px;top:1238.0px;height:25px;line-height:25px;font-size:18px;color:#0d0d0d;">2</div>
<div style="position:absolute;left:390px;top:1285px;width:1013px;height:45px;background:#edf2f0;border-radius:8px;"></div>
<svg style="position:absolute;left:813.0px;top:1296.5px" width="20" height="20" viewBox="0 0 24 24" fill="none" stroke="#0d0d0d" stroke-width="2" stroke-linecap="round" stroke-linejoin="round"><path d="m21.73 18-8-14a2 2 0 0 0-3.48 0l-8 14A2 2 0 0 0 4 21h16a2 2 0 0 0 1.73-3"/><path d="M12 9v4"/><path d="M12 17h.01"/></svg>
<div class="t" style="left:853px;top:1295.0px;height:25px;line-height:25px;font-size:18px;color:#0d0d0d;letter-spacing:0.3px;">Report Incident</div>
<div style="position:absolute;left:1433px;top:285px;width:1px;height:1045px;background:#c4c8c7;border-radius:0px;"></div>
<div class="t" style="left:1464px;top:282.5px;height:22px;line-height:22px;font-size:15.5px;color:#0d0d0d;letter-spacing:0.12px;font-weight:700;">GUIDE REQUIREMENTS</div>
<div style="position:absolute;left:1464px;top:312px;width:500px;height:52px;background:#f3f6f5;border-radius:8px;box-shadow:inset 0 0 0 1.5px #c9d6d1;"></div>
<svg style="position:absolute;left:1479.0px;top:327.5px" width="20" height="20" viewBox="0 0 24 24" fill="none" stroke="#03684a" stroke-width="2" stroke-linecap="round" stroke-linejoin="round"><path d="M16 20V4a2 2 0 0 0-2-2h-4a2 2 0 0 0-2 2v16"/><rect width="20" height="14" x="2" y="6" rx="2"/></svg>
<div class="t" style="left:1509px;top:326.5px;height:25px;line-height:25px;font-size:18px;color:#03684a;">Roles</div>
<div class="t" style="left:749px;width:1200px;text-align:right;top:326.5px;height:25px;line-height:25px;font-size:18px;color:#0d0d0d;font-style:italic;">Not set</div>
<div style="position:absolute;left:1974px;top:312px;width:501px;height:52px;background:#f3f6f5;border-radius:8px;box-shadow:inset 0 0 0 1.5px #c9d6d1;"></div>
<svg style="position:absolute;left:1989.0px;top:327.5px" width="20" height="20" viewBox="0 0 24 24" fill="none" stroke="#03684a" stroke-width="2" stroke-linecap="round" stroke-linejoin="round"><path d="m5 8 6 6"/><path d="m4 14 6-6 2-3"/><path d="M2 5h12"/><path d="M7 2h1"/><path d="m22 22-5-10-5 10"/><path d="M14 18h6"/></svg>
<div class="t" style="left:2019px;top:326.5px;height:25px;line-height:25px;font-size:18px;color:#03684a;">Languages</div>
<div class="t" style="left:1260px;width:1200px;text-align:right;top:326.5px;height:25px;line-height:25px;font-size:18px;color:#0d0d0d;">-</div>
<div style="position:absolute;left:1464px;top:374px;width:500px;height:50px;background:#f3f6f5;border-radius:8px;"></div>
<svg style="position:absolute;left:1479.0px;top:388.5px" width="20" height="20" viewBox="0 0 24 24" fill="none" stroke="#0d0d0d" stroke-width="2" stroke-linecap="round" stroke-linejoin="round"><rect width="20" height="12" x="2" y="6" rx="2"/><circle cx="12" cy="12" r="2"/><path d="M6 12h.01M18 12h.01"/></svg>
<div class="t" style="left:1509px;top:387.5px;height:25px;line-height:25px;font-size:18px;color:#0d0d0d;">Pay</div>
<div class="t" style="left:749px;width:1200px;text-align:right;top:387.5px;height:25px;line-height:25px;font-size:18px;color:#0d0d0d;letter-spacing:0.12px;">Daily rate 50,000–60,000 ISK</div>
<div style="position:absolute;left:1974px;top:374px;width:501px;height:50px;background:#f3f6f5;border-radius:8px;"></div>
<svg style="position:absolute;left:1989.0px;top:388.5px" width="20" height="20" viewBox="0 0 24 24" fill="none" stroke="#0d0d0d" stroke-width="2" stroke-linecap="round" stroke-linejoin="round"><polyline points="22 7 13.5 15.5 8.5 10.5 2 17"/><polyline points="16 7 22 7 22 13"/></svg>
<div class="t" style="left:2019px;top:387.5px;height:25px;line-height:25px;font-size:18px;color:#0d0d0d;">Activities</div>
<div style="position:absolute;left:2133px;top:387px;width:165px;height:24px;background:#e6e9e8;border-radius:12.0px;"></div>
<div class="t" style="left:1615.5px;width:1200px;text-align:center;top:388.0px;height:21px;line-height:21px;font-size:14.8px;color:#0d0d0d;letter-spacing:0.05px;font-weight:700;">General Sightseeing</div>
<div style="position:absolute;left:2303px;top:387px;width:157px;height:24px;background:#e6e9e8;border-radius:12.0px;"></div>
<div class="t" style="left:1781.5px;width:1200px;text-align:center;top:388.0px;height:21px;line-height:21px;font-size:14.8px;color:#0d0d0d;letter-spacing:0.05px;font-weight:700;">Photography Tours</div>
<div style="position:absolute;left:1464px;top:434px;width:500px;height:50px;background:#f3f6f5;border-radius:8px;"></div>
<svg style="position:absolute;left:1479.0px;top:448.5px" width="20" height="20" viewBox="0 0 24 24" fill="none" stroke="#0d0d0d" stroke-width="2" stroke-linecap="round" stroke-linejoin="round"><path d="M21.42 10.922a1 1 0 0 0-.019-1.838L12.83 5.18a2 2 0 0 0-1.66 0L2.6 9.08a1 1 0 0 0 0 1.832l8.57 3.908a2 2 0 0 0 1.66 0z"/><path d="M22 10v6"/><path d="M6 12.5V16a6 3 0 0 0 12 0v-3.5"/></svg>
<div class="t" style="left:1509px;top:447.5px;height:25px;line-height:25px;font-size:18px;color:#0d0d0d;">Expertise</div>
<div style="position:absolute;left:1640px;top:447px;width:79px;height:25px;background:#e6e9e8;border-radius:12.5px;"></div>
<div class="t" style="left:1079.5px;width:1200px;text-align:center;top:448.5px;height:21px;line-height:21px;font-size:14.8px;color:#0d0d0d;letter-spacing:0.05px;font-weight:700;">Geology</div>
<div style="position:absolute;left:1724px;top:447px;width:142px;height:25px;background:#e6e9e8;border-radius:12.5px;"></div>
<div class="t" style="left:1195.0px;width:1200px;text-align:center;top:448.5px;height:21px;line-height:21px;font-size:14.8px;color:#0d0d0d;letter-spacing:0.05px;font-weight:700;">Natural Sciences</div>
<div style="position:absolute;left:1871px;top:447px;width:78px;height:25px;background:#f08530;border-radius:12.5px;"></div>
<div class="t" style="left:1310.0px;width:1200px;text-align:center;top:448.5px;height:21px;line-height:21px;font-size:14.8px;color:#0d0d0d;letter-spacing:0.05px;font-weight:700;">+1 more</div>
<div style="position:absolute;left:1974px;top:434px;width:501px;height:50px;background:#f3f6f5;border-radius:8px;"></div>
<svg style="position:absolute;left:1989.0px;top:448.5px" width="20" height="20" viewBox="0 0 24 24" fill="none" stroke="#0d0d0d" stroke-width="2" stroke-linecap="round" stroke-linejoin="round"><path d="m15.477 12.89 1.515 8.526a.5.5 0 0 1-.81.47l-3.58-2.687a1 1 0 0 0-1.197 0l-3.586 2.686a.5.5 0 0 1-.81-.469l1.514-8.526"/><circle cx="12" cy="8" r="6"/></svg>
<div class="t" style="left:2019px;top:447.5px;height:25px;line-height:25px;font-size:18px;color:#0d0d0d;">Skills</div>
<div class="t" style="left:1260px;width:1200px;text-align:right;top:447.5px;height:25px;line-height:25px;font-size:18px;color:#0d0d0d;font-style:italic;">Not set</div>
<div style="position:absolute;left:1464px;top:494px;width:500px;height:50px;background:#f3f6f5;border-radius:8px;"></div>
<svg style="position:absolute;left:1479.0px;top:508.5px" width="20" height="20" viewBox="0 0 24 24" fill="none" stroke="#0d0d0d" stroke-width="2" stroke-linecap="round" stroke-linejoin="round"><path d="M19 17h2c.6 0 1-.4 1-1v-3c0-.9-.7-1.7-1.5-1.9C18.7 10.6 16 10 16 10s-1.3-1.4-2.2-2.3c-.5-.4-1.1-.7-1.8-.7H5c-.6 0-1.1.4-1.4.9l-1.4 2.9A3.7 3.7 0 0 0 2 12v4c0 .6.4 1 1 1h2"/><circle cx="7" cy="17" r="2"/><path d="M9 17h6"/><circle cx="17" cy="17" r="2"/></svg>
<div class="t" style="left:1509px;top:507.5px;height:25px;line-height:25px;font-size:18px;color:#0d0d0d;">License</div>
<div class="t" style="left:749px;width:1200px;text-align:right;top:507.5px;height:25px;line-height:25px;font-size:18px;color:#0d0d0d;font-style:italic;">Not required</div>
<div style="position:absolute;left:1974px;top:494px;width:501px;height:50px;background:#f3f6f5;border-radius:8px;"></div>
<svg style="position:absolute;left:1989.0px;top:508.5px" width="20" height="20" viewBox="0 0 24 24" fill="none" stroke="#0d0d0d" stroke-width="2" stroke-linecap="round" stroke-linejoin="round"><path d="M16 21v-2a4 4 0 0 0-4-4H6a4 4 0 0 0-4 4v2"/><circle cx="9" cy="7" r="4"/><path d="M22 21v-2a4 4 0 0 0-3-3.87"/><path d="M16 3.130a4 4 0 0 1 0 7.75"/></svg>
<div class="t" style="left:2019px;top:507.5px;height:25px;line-height:25px;font-size:18px;color:#0d0d0d;">Guides</div>
<div class="t" style="left:1260px;width:1200px;text-align:right;top:507.5px;height:25px;line-height:25px;font-size:18px;color:#0d0d0d;">2 unique</div>
<div class="t" style="left:1464px;top:566.6px;height:22px;line-height:22px;font-size:15.5px;color:#0d0d0d;letter-spacing:-0.3px;">TOUR PIPELINE</div>
<svg style="position:absolute;left:1464px;top:612px" width="175" height="175" viewBox="1464 612 175 175"><path d="M1628.96 702.00 A77.5 77.5 0 1 1 1629.00 698.96 L1601.50 699.15 A50 50 0 1 0 1601.47 701.11Z" fill="#5b9fae"/></svg>
<div class="t" style="left:951.5px;width:1200px;text-align:center;top:666.8px;height:45px;line-height:45px;font-size:32px;color:#0d0d0d;font-weight:700;">2</div>
<div class="t" style="left:951.5px;width:1200px;text-align:center;top:707.5px;height:21px;line-height:21px;font-size:15px;color:#0d0d0d;letter-spacing:0.5px;">Total</div>
<div style="position:absolute;left:1669px;top:598.0px;width:15px;height:15px;background:#0d0d0d;border-radius:4px;"></div>
<div class="t" style="left:1694px;top:594.0px;height:25px;line-height:25px;font-size:18px;color:#0d0d0d;">Draft</div>
<div class="t" style="left:1265px;width:1200px;text-align:right;top:594.0px;height:25px;line-height:25px;font-size:18px;color:#0d0d0d;">0</div>
<div style="position:absolute;left:1669px;top:635.6px;width:15px;height:15px;background:#03684a;border-radius:4px;"></div>
<div class="t" style="left:1694px;top:631.6px;height:25px;line-height:25px;font-size:18px;color:#0d0d0d;">Hiring</div>
<div class="t" style="left:1265px;width:1200px;text-align:right;top:631.6px;height:25px;line-height:25px;font-size:18px;color:#0d0d0d;">0</div>
<div style="position:absolute;left:1669px;top:673.2px;width:15px;height:15px;background:#f08530;border-radius:4px;"></div>
<div class="t" style="left:1694px;top:669.2px;height:25px;line-height:25px;font-size:18px;color:#0d0d0d;">Reviewing Candidates</div>
<div class="t" style="left:1265px;width:1200px;text-align:right;top:669.2px;height:25px;line-height:25px;font-size:18px;color:#0d0d0d;">0</div>
<div style="position:absolute;left:1669px;top:710.8px;width:15px;height:15px;background:#5b9fae;border-radius:4px;"></div>
<div class="t" style="left:1694px;top:706.8px;height:25px;line-height:25px;font-size:18px;color:#0d0d0d;">Filled</div>
<div class="t" style="left:1265px;width:1200px;text-align:right;top:706.8px;height:25px;line-height:25px;font-size:18px;color:#0d0d0d;">2</div>
<div style="position:absolute;left:1669px;top:748.4px;width:15px;height:15px;background:#a63c31;border-radius:4px;"></div>
<div class="t" style="left:1694px;top:744.4px;height:25px;line-height:25px;font-size:18px;color:#0d0d0d;">Cancelled</div>
<div class="t" style="left:1265px;width:1200px;text-align:right;top:744.4px;height:25px;line-height:25px;font-size:18px;color:#0d0d0d;">0</div>
<div style="position:absolute;left:1669px;top:786.0px;width:15px;height:15px;background:#9a8a7a;border-radius:4px;"></div>
<div class="t" style="left:1694px;top:782.0px;height:25px;line-height:25px;font-size:18px;color:#0d0d0d;">Expired</div>
<div class="t" style="left:1265px;width:1200px;text-align:right;top:782.0px;height:25px;line-height:25px;font-size:18px;color:#0d0d0d;">0</div>
<div class="t" style="left:1464px;top:821.6px;height:22px;line-height:22px;font-size:15.5px;color:#0d0d0d;letter-spacing:-0.3px;">STAFFING</div>
<div class="t" style="left:1464px;top:855.5px;height:35px;line-height:35px;font-size:25px;color:#0d0d0d;letter-spacing:0.5px;font-weight:700;">100%</div>
<div class="t" style="left:1537px;top:864.5px;height:21px;line-height:21px;font-size:15px;color:#0d0d0d;letter-spacing:0.6px;">filled</div>
<div class="t" style="left:1275px;width:1200px;text-align:right;top:861.5px;height:25px;line-height:25px;font-size:18px;color:#0d0d0d;letter-spacing:0.5px;">2 of 2</div>
<div style="position:absolute;left:1464px;top:904px;width:1011px;height:13px;background:#03684a;border-radius:7px;"></div>
<div style="position:absolute;left:1474px;top:950px;width:12px;height:12px;border-radius:6px;background:#03684a"></div>
<div class="t" style="left:1496px;top:945.0px;height:25px;line-height:25px;font-size:18px;color:#0d0d0d;">Filled</div>
<div class="t" style="left:1549px;top:945.0px;height:25px;line-height:25px;font-size:18px;color:#0d0d0d;">2</div>
<div style="position:absolute;left:1984px;top:950px;width:12px;height:12px;border-radius:6px;background:#f08530"></div>
<div class="t" style="left:2006px;top:945.0px;height:25px;line-height:25px;font-size:18px;color:#0d0d0d;">Unfilled</div>
<div class="t" style="left:2080px;top:945.0px;height:25px;line-height:25px;font-size:18px;color:#0d0d0d;">0</div>
<div style="position:absolute;left:390px;top:1350px;width:2085px;height:1px;background:#c4c8c7;border-radius:0px;"></div>
<div style="position:absolute;left:390px;top:1371px;width:1035px;height:45px;background:#03684a;border-radius:8px;"></div>
<svg style="position:absolute;left:812.0px;top:1383.5px" width="20" height="20" viewBox="0 0 24 24" fill="none" stroke="#fff" stroke-width="2" stroke-linecap="round" stroke-linejoin="round"><path d="M5 12h14"/><path d="M12 5v14"/></svg>
<div class="t" style="left:852px;top:1382.0px;height:25px;line-height:25px;font-size:18px;color:#fff;letter-spacing:0.25px;">Add Tour to Series</div>
<div style="position:absolute;left:1440px;top:1371px;width:1035px;height:45px;background:#edf2f0;border-radius:8px;"></div>
<svg style="position:absolute;left:1856.0px;top:1383.5px" width="20" height="20" viewBox="0 0 24 24" fill="none" stroke="#0d0d0d" stroke-width="2" stroke-linecap="round" stroke-linejoin="round"><path d="M3 12a9 9 0 0 1 9-9 9.75 9.75 0 0 1 6.74 2.74L21 8"/><path d="M21 3v5h-5"/><path d="M21 12a9 9 0 0 1-9 9 9.75 9.75 0 0 1-6.74-2.74L3 16"/><path d="M8 16H3v5"/></svg>
<div class="t" style="left:1896px;top:1381.5px;height:25px;line-height:25px;font-size:18px;color:#0d0d0d;letter-spacing:0.25px;">Propagate Changes</div>
</div>
</body></html>
